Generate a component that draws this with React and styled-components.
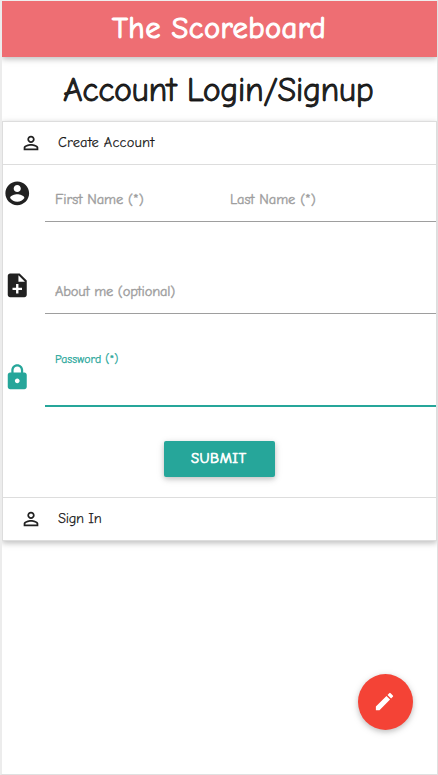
import React from "react";
import styled, { createGlobalStyle, css } from "styled-components";

const GlobalStyle = createGlobalStyle`
  *, *::before, *::after { box-sizing: border-box; }
  body {
    margin: 0;
    background: #ececec;
    color: rgba(0, 0, 0, 0.87);
    font-family: "Comic Neue", Inter, "Open Sans", sans-serif;
    overflow: hidden;
  }
`;

const raised = css`
  box-shadow: 0 2px 5px 0 rgba(0, 0, 0, 0.16), 0 2px 8px 0 rgba(0, 0, 0, 0.12);
`;

const Screen = styled.div`
  position: relative;
  width: 438px;
  height: 775px;
  border: solid #e0e0e0;
  border-width: 1px 1px 1px 2px;
  border-top-color: #eeeeee;
  border-left-color: #ececec;
  background: #fff;
  overflow: hidden;
`;

const Label = styled.span`
  display: inline-block;
  white-space: nowrap;
  font-size: ${(p) => p.$size}px;
  letter-spacing: ${(p) => p.$track || 0}px;
  -webkit-text-stroke: ${(p) => p.$stroke ?? 0.25}px currentColor;
`;

const NavBar = styled.header`
  height: 56px;
  padding-left: 110px;
  background: #ee6e73;
  color: #fff;
  line-height: 55px;
  ${raised}
`;

const Title = styled.h1`
  height: 64px;
  margin: 0;
  padding-left: 61px;
  line-height: 66px;
  font-weight: 400;
`;

const Collapsible = styled.section`
  height: 420px;
  border: 1px solid #ddd;
  border-bottom: 0;
  ${raised}
`;

const SectionHeader = styled.div`
  display: flex;
  align-items: center;
  height: 43px;
  padding-left: 17px;
  border-bottom: 1px solid #ddd;
  line-height: 40px;
`;

const HeaderText = styled.div`
  margin-left: 16px;
  height: 42px;
`;

const SectionBody = styled.div`
  height: 333px;
  border-bottom: 1px solid #ddd;
`;

const Field = styled.div`
  display: flex;
  height: 92px;
  color: ${(p) => (p.$active ? "#26a69a" : "inherit")};
`;

const FieldIcon = styled.div`
  width: 42px;
  padding-top: 13.5px;
`;

const Inputs = styled.div`
  display: grid;
  grid-template-columns: ${(p) => (p.$split ? "175px 1fr" : "1fr")};
  flex: 1;
  height: ${(p) => (p.$active ? 58 : 57)}px;
  padding-left: 10px;
  border-bottom: ${(p) => (p.$active ? "2px solid #26a69a" : "1px solid #9e9e9e")};
  color: ${(p) => (p.$active ? "#26a69a" : "#9e9e9e")};
  line-height: ${(p) => (p.$active ? 21 : 70)}px;
`;

const Submit = styled.button`
  display: block;
  width: 111px;
  height: 36px;
  margin: 0 0 0 161px;
  padding: 0 0 2px 27px;
  border: 0;
  border-radius: 2px;
  background: #26a69a;
  color: #fff;
  font: inherit;
  line-height: 34px;
  text-align: left;
  ${raised}
`;

const FloatingButton = styled.button`
  position: absolute;
  right: 24px;
  bottom: 44px;
  display: grid;
  place-items: center;
  width: 55px;
  height: 56px;
  padding: 0 2px 2px 0;
  border: 0;
  border-radius: 50%;
  background: #f44336;
  color: #fff;
  ${raised}
`;

const Svg = styled.svg`
  display: block;
  flex: none;
  fill: currentColor;
`;

const paths = {
  person:
    "M12 5.9c1.16 0 2.1.94 2.1 2.1s-.94 2.1-2.1 2.1S9.9 9.16 9.9 8s.94-2.1 2.1-2.1m0 9c2.97 0 6.1 1.46 6.1 2.1v1.1H5.9V17c0-.64 3.13-2.1 6.1-2.1M12 4C9.79 4 8 5.79 8 8s1.79 4 4 4 4-1.79 4-4-1.79-4-4-4zm0 9c-2.67 0-8 1.34-8 4v3h16v-3c0-2.66-5.33-4-8-4z",
  account:
    "M12 2C6.48 2 2 6.48 2 12s4.48 10 10 10 10-4.48 10-10S17.52 2 12 2zm0 3c1.66 0 3 1.34 3 3s-1.34 3-3 3-3-1.34-3-3 1.34-3 3-3zm0 14.2c-2.5 0-4.71-1.28-6-3.22.03-1.99 4-3.08 6-3.08 1.99 0 5.97 1.09 6 3.08-1.29 1.94-3.5 3.22-6 3.22z",
  note:
    "M14 2H6c-1.1 0-1.99.9-1.99 2L4 20c0 1.1.89 2 1.99 2H18c1.1 0 2-.9 2-2V8l-6-6zm2 14h-3v3h-2v-3H8v-2h3v-3h2v3h3v2zm-3-7V3.5L18.5 9H13z",
  lock:
    "M18 8h-1V6c0-2.76-2.24-5-5-5S7 3.24 7 6v2H6c-1.1 0-2 .9-2 2v10c0 1.1.9 2 2 2h12c1.1 0 2-.9 2-2V10c0-1.1-.9-2-2-2zm-6 9c-1.1 0-2-.9-2-2s.9-2 2-2 2 .9 2 2-.9 2-2 2zm3.1-9H8.9V6c0-1.71 1.39-3.1 3.1-3.1s3.1 1.39 3.1 3.1v2z",
  pencil:
    "M3 17.25V21h3.75L17.81 9.94l-3.75-3.75L3 17.25zM20.71 7.04a1 1 0 0 0 0-1.41l-2.34-2.34a1 1 0 0 0-1.41 0l-1.83 1.83 3.75 3.75 1.83-1.83z",
};

const Icon = ({ name, size }) => (
  <Svg width={size} height={size} viewBox="0 0 24 24" aria-hidden="true">
    <path d={paths[name]} />
  </Svg>
);

export default function App() {
  return (
    <>
      <GlobalStyle />
      <Screen>
        <NavBar>
          <Label $size={30.5} $track={0.45} $stroke={1.1}>The Scoreboard</Label>
        </NavBar>
        <Title>
          <Label $size={34} $track={-0.5} $stroke={0.8}>Account Login/Signup</Label>
        </Title>
        <Collapsible>
          <SectionHeader>
            <Icon name="person" size={22} />
            <HeaderText>
              <Label $size={14.5} $track={0.13}>Create Account</Label>
            </HeaderText>
          </SectionHeader>
          <SectionBody>
            <Field>
              <FieldIcon>
                <Icon name="account" size={28.5} />
              </FieldIcon>
              <Inputs $split>
                <Label $size={14.5} $track={-0.05} $stroke={0.4}>First Name (*)</Label>
                <Label $size={14.5} $track={-0.05} $stroke={0.4}>Last Name (*)</Label>
              </Inputs>
            </Field>
            <Field>
              <FieldIcon>
                <Icon name="note" size={28.5} />
              </FieldIcon>
              <Inputs>
                <Label $size={14.5} $track={-0.17} $stroke={0.4}>About me (optional)</Label>
              </Inputs>
            </Field>
            <Field $active>
              <FieldIcon>
                <Icon name="lock" size={28.5} />
              </FieldIcon>
              <Inputs $active>
                <Label $size={11.8} $track={0.08}>Password (*)</Label>
              </Inputs>
            </Field>
            <Submit>
              <Label $size={14.5} $track={0.55} $stroke={0.7}>SUBMIT</Label>
            </Submit>
          </SectionBody>
          <SectionHeader>
            <Icon name="person" size={22} />
            <HeaderText>
              <Label $size={14.5} $track={-0.3}>Sign In</Label>
            </HeaderText>
          </SectionHeader>
        </Collapsible>
        <FloatingButton aria-label="Edit">
          <Icon name="pencil" size={23} />
        </FloatingButton>
      </Screen>
    </>
  );
}
